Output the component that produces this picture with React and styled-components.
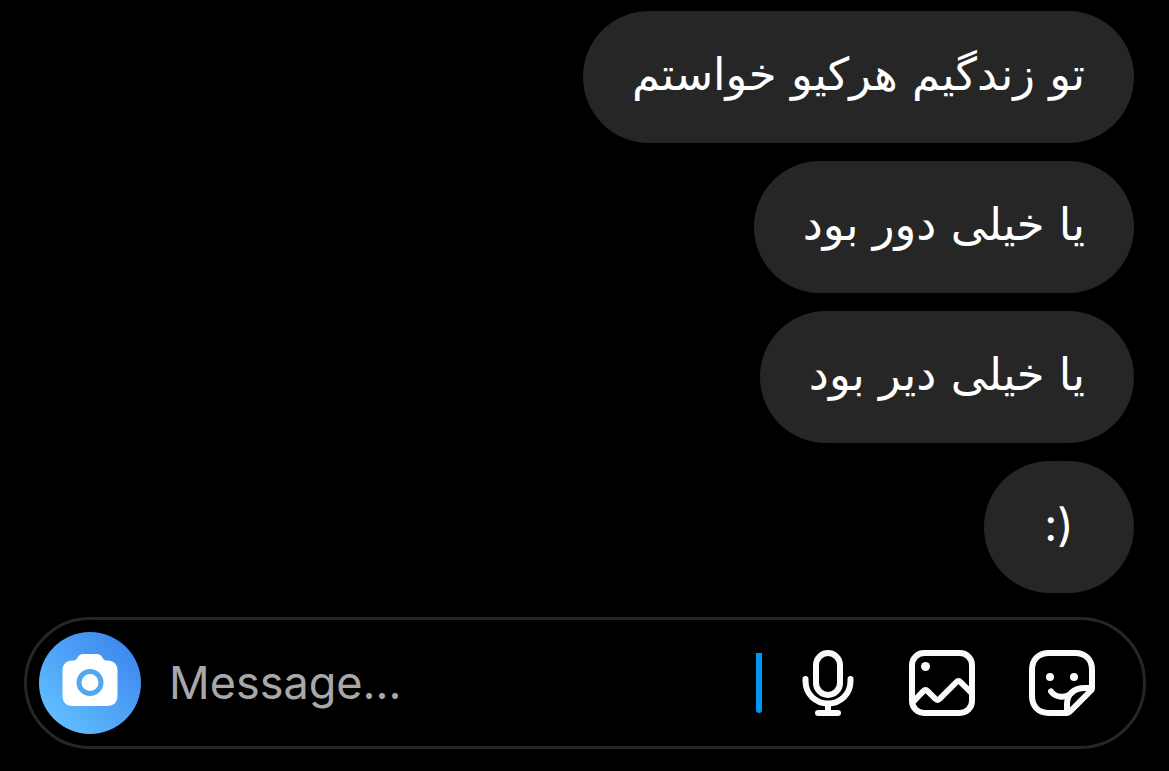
import React from "react";
import styled, { createGlobalStyle } from "styled-components";

const messages = [
  { text: "تو زندگیم هرکیو خواستم", dir: "rtl" },
  { text: "یا خیلی دور بود", dir: "rtl" },
  { text: "یا خیلی دیر بود", dir: "rtl" },
  { text: ":)", dir: "ltr" },
];

const App = () => {
  return (
    <>
      <GlobalStyle />
      <Chat>
        <MessageList>
          {messages.map((message) => (
            <Bubble key={message.text} dir={message.dir}>
              {message.text}
            </Bubble>
          ))}
        </MessageList>
        <Composer>
          <CameraButton type="button" aria-label="Camera">
            <CameraIcon />
          </CameraButton>
          <MessageInput
            type="text"
            aria-label="Message"
            placeholder="Message..."
          />
          <Caret />
          <Actions>
            <IconButton type="button" aria-label="Voice message">
              <MicIcon />
            </IconButton>
            <IconButton type="button" aria-label="Photo">
              <PhotoIcon />
            </IconButton>
            <IconButton type="button" aria-label="Sticker">
              <StickerIcon />
            </IconButton>
          </Actions>
        </Composer>
      </Chat>
    </>
  );
};

// icons
const CameraIcon = () => (
  <svg width="56" height="54" viewBox="0 0 56 54" fill="none">
    <path
      d="M11 7.500c2 0 3-.5 4-2C17 2 18.500 1 22 1h12c3.500 0 5 1 7 4.500c1 1.500 2 2 4 2c7 0 10.500 4 10.500 10v25c0 7-4 10.500-10.500 10.500H11C4 53 .5 49 .5 42.500v-25c0-6 3.500-10 10.500-10Z"
      fill="#fff"
    />
    <circle cx="28" cy="29.500" r="11" stroke="#52a8f0" strokeWidth="5" />
  </svg>
);

const MicIcon = () => (
  <svg width="54" height="66" viewBox="0 0 54 66" {...strokeProps}>
    <rect x="15" y="3" width="24" height="42" rx="12" />
    <path d="M4.500 29v2c0 13 10 22.500 22.500 22.500S49.500 44 49.500 31v-2" />
    <path d="M27 54v8M17 63h20" />
  </svg>
);

const PhotoIcon = () => (
  <svg width="66" height="66" viewBox="0 0 66 66" {...strokeProps}>
    <rect x="3" y="3" width="60" height="60" rx="12" />
    <circle cx="16.500" cy="16.500" r="4.500" fill="#fafafa" stroke="none" />
    <path d="M4 52l10-10.500q2.500-2.500 5 0l7 7q2.500 2.500 5 0l16-16q2.500-2.500 5 0L62 42.500" />
  </svg>
);

const StickerIcon = () => (
  <svg width="66" height="66" viewBox="0 0 66 66" {...strokeProps}>
    <path d="M38 63H20C9 63 3 56 3 46V20C3 9 10 3 20 3h26c10 0 17 6 17 17v18q0 1.500-1 2.500L41 61.500Q39.500 63 38 63Z" />
    <path d="M62 38h-6C44 38 38 45 38 54v8" />
    <path d="M22 41.500c5 6.500 15 7 21 1" />
    <circle cx="21" cy="27" r="4" fill="#fafafa" stroke="none" />
    <circle cx="45" cy="27" r="4" fill="#fafafa" stroke="none" />
  </svg>
);

const strokeProps = {
  fill: "none",
  stroke: "#fafafa",
  strokeWidth: 6,
  strokeLinecap: "round",
  strokeLinejoin: "round",
};

// styling
const GlobalStyle = createGlobalStyle`
  * {
    box-sizing: border-box;
  }
  body {
    margin: 0;
    background: #000;
    color: #fff;
    font-family: Inter, sans-serif;
  }
  svg {
    display: block;
  }
`;

const Chat = styled.main`
  min-height: 100vh;
  padding: 11px 23px 22px 24px;
  display: flex;
  flex-direction: column;
  justify-content: flex-end;
  gap: 24px;
`;

const MessageList = styled.div`
  display: flex;
  flex-direction: column;
  align-items: flex-end;
  gap: 18px;
  padding-right: 12px;
`;

const Bubble = styled.p`
  margin: 0;
  min-width: 150px;
  padding: 34px 49px 38px;
  border-radius: 66px;
  background: #262626;
  font-family: ${({ dir }) =>
    dir === "rtl" ? '"DejaVu Sans", sans-serif' : "Inter, sans-serif"};
  font-size: 45px;
  line-height: 60px;
  text-align: center;
`;

const Composer = styled.form`
  display: flex;
  align-items: center;
  padding: 12px 48px 12px 12px;
  border: 3px solid #262626;
  border-radius: 66px;
`;

const IconButton = styled.button`
  flex: none;
  padding: 0;
  border: none;
  background: none;
  cursor: pointer;
`;

const CameraButton = styled(IconButton)`
  width: 102px;
  height: 102px;
  display: flex;
  align-items: center;
  justify-content: center;
  padding-bottom: 6px;
  border-radius: 50%;
  background: linear-gradient(45deg, #62c0ff 10%, #3c86ee 90%);
`;

const MessageInput = styled.input`
  flex: 1;
  min-width: 0;
  height: 60px;
  padding: 0 0 2px 28px;
  border: none;
  outline: none;
  background: none;
  color: #fff;
  font-family: inherit;
  font-size: 45px;
  &::placeholder {
    color: #a8a8a8;
    opacity: 1;
  }
`;

const Caret = styled.span`
  flex: none;
  width: 6px;
  height: 60px;
  border-radius: 0 0 3px 3px;
  background: #0095f6;
`;

const Actions = styled.div`
  display: flex;
  align-items: center;
  gap: 54px;
  margin-left: 39px;
`;

export default App;
